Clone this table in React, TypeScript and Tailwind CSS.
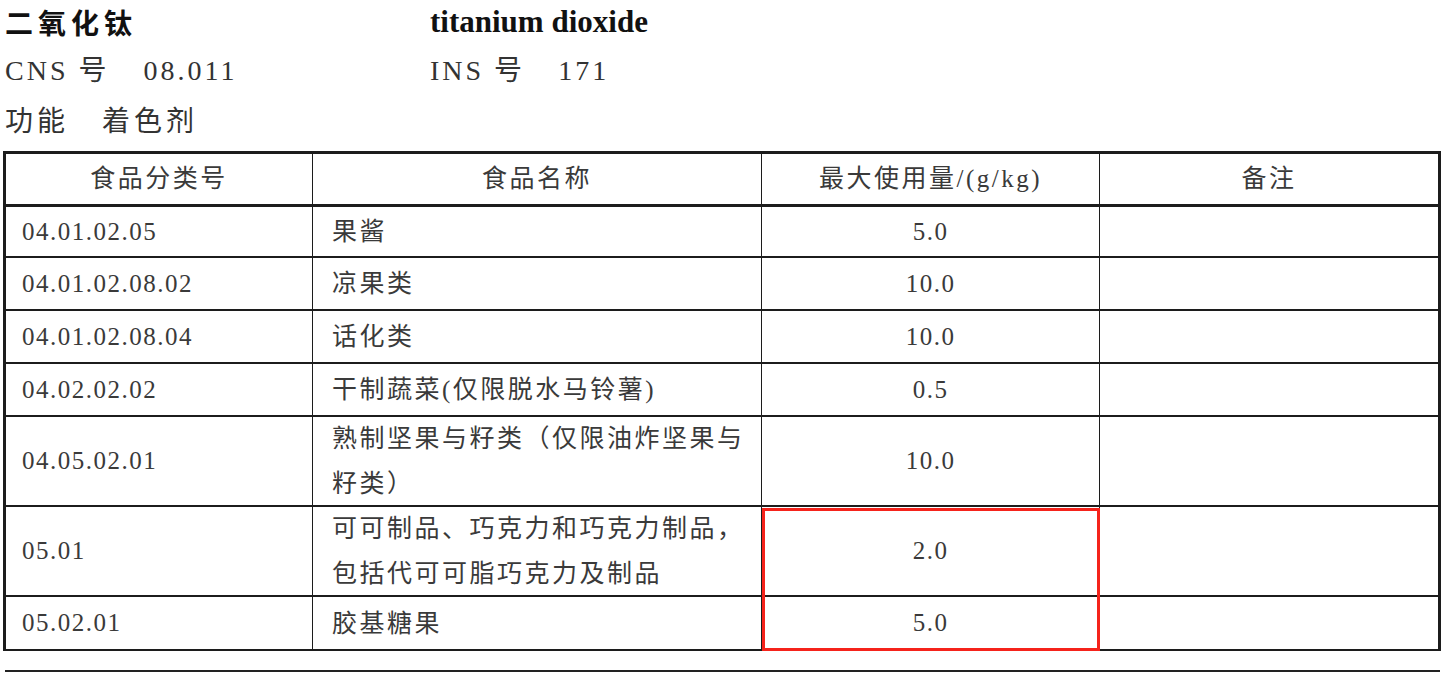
const SERIF = "font-['Liberation_Serif','Noto_Sans_CJK_SC',serif]";

const ROWS = [
    { code: "04.01.02.05", name: ["果酱"], max: "5.0", h: "h-[51px]" },
    { code: "04.01.02.08.02", name: ["凉果类"], max: "10.0", h: "h-[53px]" },
    { code: "04.01.02.08.04", name: ["话化类"], max: "10.0", h: "h-[53px]" },
    { code: "04.02.02.02", name: ["干制蔬菜(仅限脱水马铃薯)"], max: "0.5", h: "h-[53px]" },
    { code: "04.05.02.01", name: ["熟制坚果与籽类（仅限油炸坚果与", "籽类）"], max: "10.0", h: "h-[90px]" },
    { code: "05.01", name: ["可可制品、巧克力和巧克力制品，", "包括代可可脂巧克力及制品"], max: "2.0", h: "h-[90px]" },
    { code: "05.02.01", name: ["胶基糖果"], max: "5.0", h: "h-[52px]" }
];

export default function App() {
    return (
        <div className={`w-[1446px] h-[675px] bg-white overflow-hidden text-[#2a2a2a] ${SERIF}`}>
            {/* heading block */}
            <div className="pl-[5px]">
                <div className="flex items-center h-[44px]">
                    <span className="w-[425px] text-[28px] font-bold tracking-[5px] text-[#111] font-['Noto_Sans_CJK_SC',sans-serif]">
                        二氧化钛
                    </span>
                    <span className="text-[31px] font-bold text-[#111]">titanium dioxide</span>
                </div>
                <div className="flex items-center h-[54px] text-[28px] tracking-[3px] text-[#333]">
                    <div className="w-[425px] flex">
                        <span>CNS 号</span>
                        <span className="ml-[34px]">08.011</span>
                    </div>
                    <div className="flex">
                        <span>INS 号</span>
                        <span className="ml-[33px]">171</span>
                    </div>
                </div>
                <div className="flex items-center h-[48px] text-[28px] tracking-[4px] text-[#333]">
                    <span>功能</span>
                    <span className="ml-[33px]">着色剂</span>
                </div>
            </div>

            {/* table */}
            <div className="relative ml-[3px] mt-[5px] w-[1438px] border-t-[3px] border-l-[3px] border-r-[3px] border-b-2 border-[#1c1c1c] text-[25px] text-[#3a3a3a]">
                <div className="grid grid-cols-[307px_449px_338px_338px]">
                    {["食品分类号", "食品名称", "最大使用量/(g/kg)", "备注"].map((t, i) => (
                        <div
                            key={t}
                            className={`h-[53px] flex items-center justify-center border-b-[3px] border-[#1c1c1c] tracking-[2.5px] ${i < 3 ? "border-r" : ""}`}
                        >
                            {t}
                        </div>
                    ))}

                    {ROWS.map((row, r) => {
                        const last = r === ROWS.length - 1;
                        const line = last ? "" : "border-b-2";
                        return [
                            <div key={`c${r}`} className={`${row.h} ${line} border-r border-[#1c1c1c] flex items-center pl-[16px] tracking-[1.5px]`}>
                                {row.code}
                            </div>,
                            <div key={`n${r}`} className={`${row.h} ${line} border-r border-[#1c1c1c] flex flex-col justify-center pl-[19px] tracking-[2.5px] leading-[45px]`}>
                                {row.name.map((l) => (
                                    <span key={l}>{l}</span>
                                ))}
                            </div>,
                            <div key={`m${r}`} className={`${row.h} ${line} border-r border-[#1c1c1c] flex items-center justify-center tracking-[1.5px]`}>
                                {row.max}
                            </div>,
                            <div key={`r${r}`} className={`${row.h} ${line} border-[#1c1c1c]`} />
                        ];
                    })}
                </div>

                {/* highlight box */}
                <div className="absolute left-[756px] top-[354px] w-[338px] h-[143px] border-[3px] border-[#f5231b] pointer-events-none" />
            </div>

            <div className="ml-[5px] mt-[19px] w-[1435px] h-[2px] bg-[#222]" />
        </div>
    );
}
